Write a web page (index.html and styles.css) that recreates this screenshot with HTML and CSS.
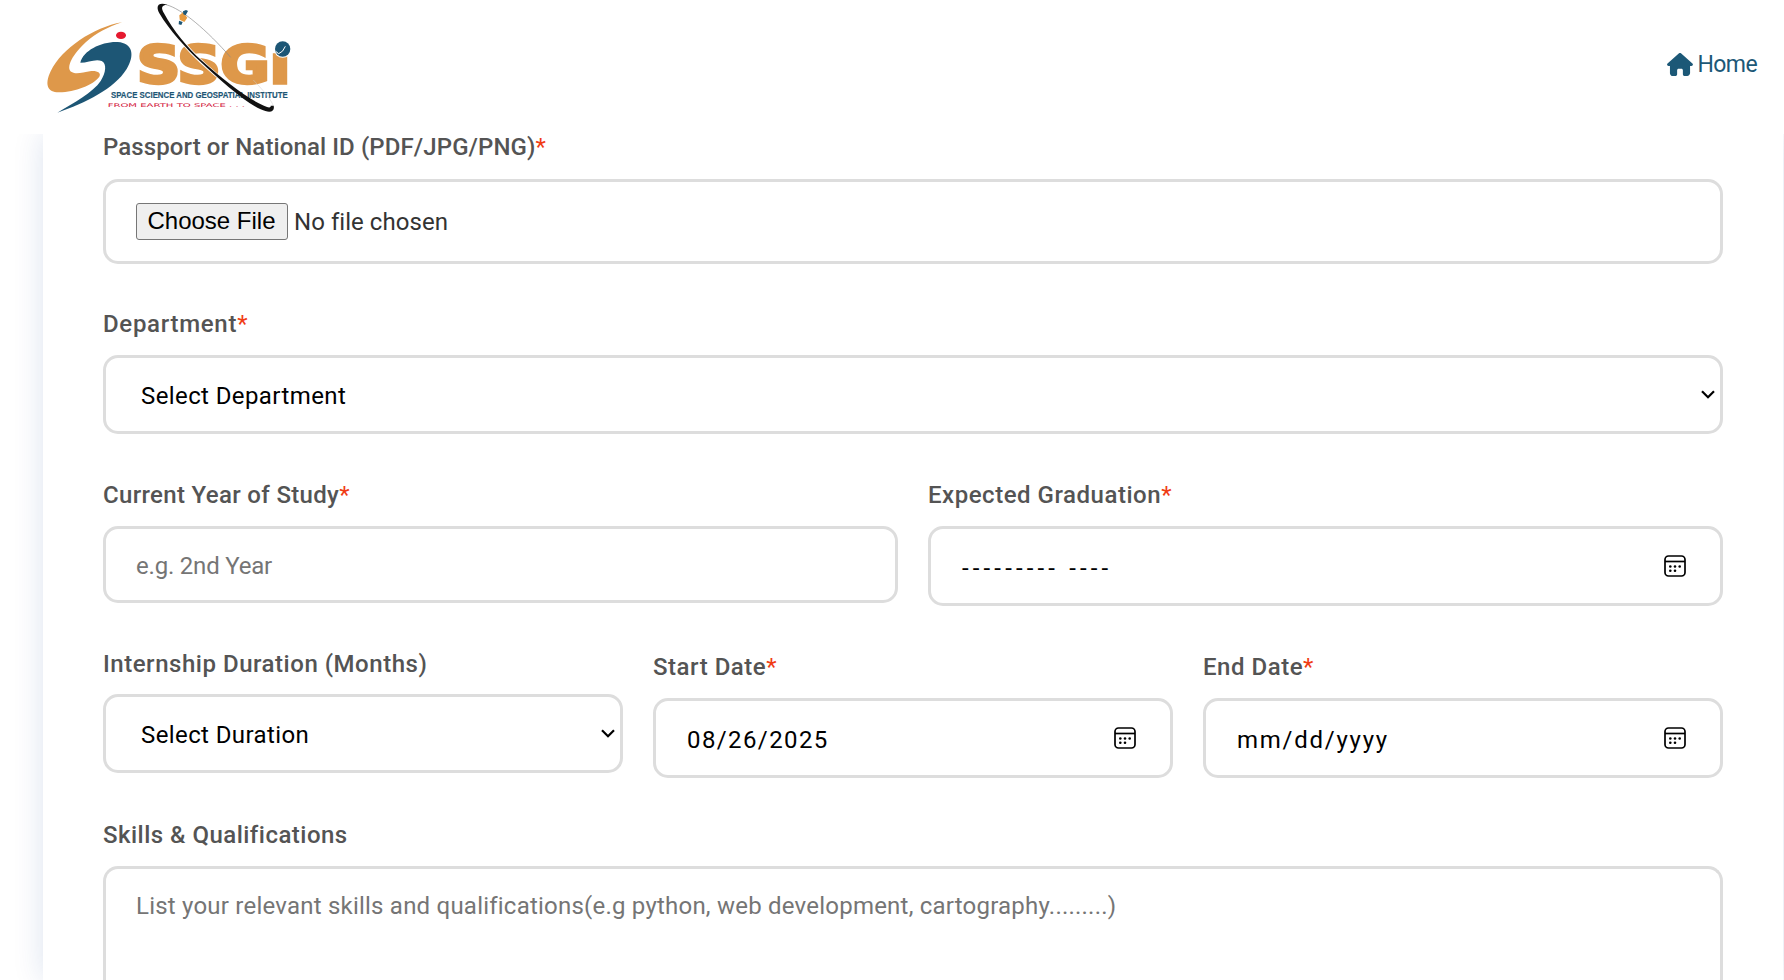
FILE: index.html
```html
<!DOCTYPE html>
<html lang="en">
<head>
<meta charset="utf-8">
<title>SSGI Internship Application</title>
<link rel="stylesheet" href="styles.css">
</head>
<body>
<header class="header">
  <svg class="logo" viewBox="0 0 840 375" role="img" aria-label="SSGI">
    <path fill="#de984a" d="M276 67C190 82 96 145 62 214C42 256 54 278 88 277C135 276 190 255 208 230C214 219 204 212 184 213C157 217 139 224 125 216C105 204 130 160 168 126C198 99 234 81 276 67Z"/>
    <path fill="#1d5675" d="M151 188C160 151 215 124 263 126C309 129 315 166 290 207C253 266 167 309 82 338C130 309 190 277 212 243C228 218 231 191 215 183C197 175 174 188 151 188Z"/>
    <ellipse cx="273" cy="106" rx="15" ry="11" fill="#e5192f"/>
    <text class="logo-name" x="321" y="248" textLength="460" lengthAdjust="spacingAndGlyphs">SSGı</text>
    <circle cx="758" cy="147" r="26" fill="#fff"/>
    <circle cx="758" cy="147" r="23" fill="#1d5675"/>
    <path d="M737 154L746 161Q759 157 766 139" fill="none" stroke="#fff" stroke-width="3"/>
    <path d="M456 125C500 177 560 227 598 256" fill="none" stroke="#fff" stroke-width="11"/>
    <text class="logo-full" x="243" y="293" textLength="530" lengthAdjust="spacingAndGlyphs">SPACE SCIENCE AND GEOSPATIAL INSTITUTE</text>
    <text class="logo-motto" x="233" y="320" textLength="412" lengthAdjust="spacingAndGlyphs">FROM EARTH TO SPACE . . .</text>
    <path d="M408 14C455 26 530 90 602 172" fill="none" stroke="#888" stroke-width="2"/>
    <path d="M670 240C704 276 724 300 730 318" fill="none" stroke="#ccc" stroke-width="1.500"/>
    <path d="M412 14C385 6 376 17 388 40C418 91 468 145 510 184C570 240 640 304 692 328C722 342 735 334 731 317L722 317C723 326 713 323 697 315C645 291 578 237 514 181C476 147 428 90 402 40C391 21 396 15 412 14Z" fill="#111"/>
    <path d="M448 46L459 37L472 53L463 66L449 59Z" fill="#e79a3e"/>
    <path d="M459 34L468 30L474 33L467 46L460 43ZM447 62L458 66L454 75L446 73Z" fill="#1d5675"/>
  </svg>
  <a class="home">
    <svg class="home-icon" viewBox="0 0 576 512"><path fill="currentColor" d="M575.8 255.500c0 18-15 32.100-32 32.100h-32l.7 160.200c0 35.300-28.700 64.200-64 64.200H392c-22.100 0-40-17.900-40-40V384c0-17.700-14.300-32-32-32H256c-17.700 0-32 14.300-32 32v88c0 22.100-17.900 40-40 40H128.100c-35.300 0-64-28.700-64-64V287.600H32c-18 0-32-14-32-32.100c0-9 3-17 10-24L266.400 8c7-7 15-8 22-8s15 2 21 7L564.800 231.500c8 7 12 15 11 24z"/></svg>
    <span class="home-text">Home</span>
  </a>
</header>

<main class="card">
  <form class="form">
    <div class="field">
      <label class="label label-passport">Passport or National ID (PDF/JPG/PNG)<span class="req">*</span></label>
      <div class="control control-file"><button type="button" class="file-button">Choose File</button><span class="file-name">No file chosen</span></div>
    </div>

    <div class="field">
      <label class="label label-department">Department<span class="req">*</span></label>
      <div class="control control-select"><span class="value">Select Department</span><svg class="chevron" viewBox="0 0 14 9"><path d="M1 1.200L7 7.300L13 1.200"/></svg></div>
    </div>

    <div class="row row-two">
      <div class="field">
        <label class="label label-year">Current Year of Study<span class="req">*</span></label>
        <input class="control control-text" type="text" placeholder="e.g. 2nd Year">
      </div>
      <div class="field">
        <label class="label">Expected Graduation<span class="req">*</span></label>
        <div class="control control-date"><span class="value value-month">--------- ----</span><svg class="calendar" viewBox="0 0 22 22"><rect x="1" y="1" width="20" height="20" rx="3.500"/><path d="M1 6.500H21"/><g class="dots"><circle cx="6.300" cy="11.500" r="1.300"/><circle cx="11" cy="11.500" r="1.300"/><circle cx="15.700" cy="11.500" r="1.300"/><circle cx="6.300" cy="15.800" r="1.300"/><circle cx="11" cy="15.800" r="1.300"/></g></svg></div>
      </div>
    </div>

    <div class="row row-three">
      <div class="field field-duration">
        <label class="label">Internship Duration (Months)</label>
        <div class="control control-select"><span class="value">Select Duration</span><svg class="chevron" viewBox="0 0 14 9"><path d="M1 1.200L7 7.300L13 1.200"/></svg></div>
      </div>
      <div class="field">
        <label class="label">Start Date<span class="req">*</span></label>
        <div class="control control-date"><span class="value value-start">08/26/2025</span><svg class="calendar" viewBox="0 0 22 22"><rect x="1" y="1" width="20" height="20" rx="3.500"/><path d="M1 6.500H21"/><g class="dots"><circle cx="6.300" cy="11.500" r="1.300"/><circle cx="11" cy="11.500" r="1.300"/><circle cx="15.700" cy="11.500" r="1.300"/><circle cx="6.300" cy="15.800" r="1.300"/><circle cx="11" cy="15.800" r="1.300"/></g></svg></div>
      </div>
      <div class="field">
        <label class="label">End Date<span class="req">*</span></label>
        <div class="control control-date"><span class="value value-end">mm/dd/yyyy</span><svg class="calendar" viewBox="0 0 22 22"><rect x="1" y="1" width="20" height="20" rx="3.500"/><path d="M1 6.500H21"/><g class="dots"><circle cx="6.300" cy="11.500" r="1.300"/><circle cx="11" cy="11.500" r="1.300"/><circle cx="15.700" cy="11.500" r="1.300"/><circle cx="6.300" cy="15.800" r="1.300"/><circle cx="11" cy="15.800" r="1.300"/></g></svg></div>
      </div>
    </div>

    <div class="field">
      <label class="label label-skills">Skills &amp; Qualifications</label>
      <textarea class="control control-area" placeholder="List your relevant skills and qualifications(e.g python, web development, cartography.........)"></textarea>
    </div>
  </form>
</main>
</body>
</html>
```
FILE: styles.css
```css
* { box-sizing: border-box; }

html, body { height: 100%; }

body {
  margin: 0;
  overflow: hidden;
  background: #fff;
  color: #333;
  font: 24px/30px Roboto, "Noto Sans", sans-serif;
  display: flex;
  flex-direction: column;
}

.header {
  flex: none;
  height: 134px;
  padding: 0 27px 0 30px;
  display: flex;
  justify-content: space-between;
  align-items: flex-start;
  background: #fff;
  position: relative;
  z-index: 1;
}

.logo { width: 280px; height: 125px; }

.logo-name {
  font: bold 154px/1 "DejaVu Sans", sans-serif;
  fill: #de984a;
  stroke: #de984a;
  stroke-width: 10;
}

.logo-full {
  font: bold 29px "Liberation Sans", sans-serif;
  fill: #1d5675;
  stroke: #1d5675;
  stroke-width: .5;
}

.logo-motto {
  font: 15px "DejaVu Sans", sans-serif;
  fill: #d32040;
}

.home {
  display: flex;
  align-items: center;
  gap: 5px;
  margin-top: 48px;
  color: #1c5877;
  font-size: 23px;
  letter-spacing: -.6px;
}

.home-icon { width: 26px; height: 23px; }
.home-text { padding-top: 2px; }

.card {
  flex: 1;
  min-height: 0;
  margin: 0 1px 0 43px;
  padding: 0 60px;
  background: #fff;
  box-shadow: 0 0 29px rgba(1, 60, 140, .14);
}

.form { display: flex; flex-direction: column; gap: 46px; }

.row { display: grid; gap: 30px; align-items: start; margin-top: 1px; }
.row-two { grid-template-columns: 1fr 1fr; }
.row-three { grid-template-columns: 1fr 1fr 1fr; margin-bottom: -3px; }

.field { min-width: 0; }
.field-duration { margin-top: -4px; }

.label {
  display: block;
  height: 45px;
  line-height: 29px;
  color: #545454;
  font-weight: 500;
  letter-spacing: .53px;
  white-space: nowrap;
}
.label-passport { letter-spacing: .1px; line-height: 27px; }
.label-department { letter-spacing: .7px; }
.label-year { letter-spacing: .33px; }
.label-skills { letter-spacing: .48px; }
.field-duration .label { line-height: 31px; }

.req { color: #f03c14; font-weight: 400; letter-spacing: 0; }

.control {
  display: flex;
  align-items: center;
  width: 100%;
  border: 3px solid #ddd;
  border-radius: 15px;
  background: #fff;
  color: #000;
  font: 24px/30px Roboto, "Noto Sans", sans-serif;
}

.control::placeholder { color: #757575; opacity: 1; }

.control-file { height: 85px; padding: 0 30px; color: #333; letter-spacing: .05px; }

.file-button {
  width: 152px;
  height: 37px;
  margin-right: 6px;
  padding: 0 1px 2px 0;
  border: 1px solid #767676;
  border-radius: 3px;
  background: #efefef;
  color: #000;
  font: 24px/32px "Liberation Sans", Arial, sans-serif;
}

.control-select {
  height: 79px;
  padding: 0 5px 0 35px;
  justify-content: space-between;
  letter-spacing: .4px;
}
.control-select .value { padding-top: 2px; }

.chevron { width: 14px; height: 9px; fill: none; stroke: #000; stroke-width: 2.2; }

.control-text { height: 77px; padding: 2px 30px 0; letter-spacing: -.2px; }

.control-date { height: 80px; padding: 0 34px 0 31px; justify-content: space-between; }
.control-date .value { padding-top: 3px; }
.value-month { letter-spacing: 4.15px; }
.value-start { letter-spacing: 1.4px; }
.value-end { letter-spacing: 1.75px; }

.calendar { width: 22px; height: 22px; fill: none; stroke: #000; stroke-width: 1.7; }
.calendar .dots { fill: #000; stroke: none; }

.control-area {
  display: block;
  height: 114px;
  padding: 22px 30px 0;
  border-bottom: 0;
  border-radius: 15px 15px 0 0;
  resize: none;
  letter-spacing: .22px;
}
```
